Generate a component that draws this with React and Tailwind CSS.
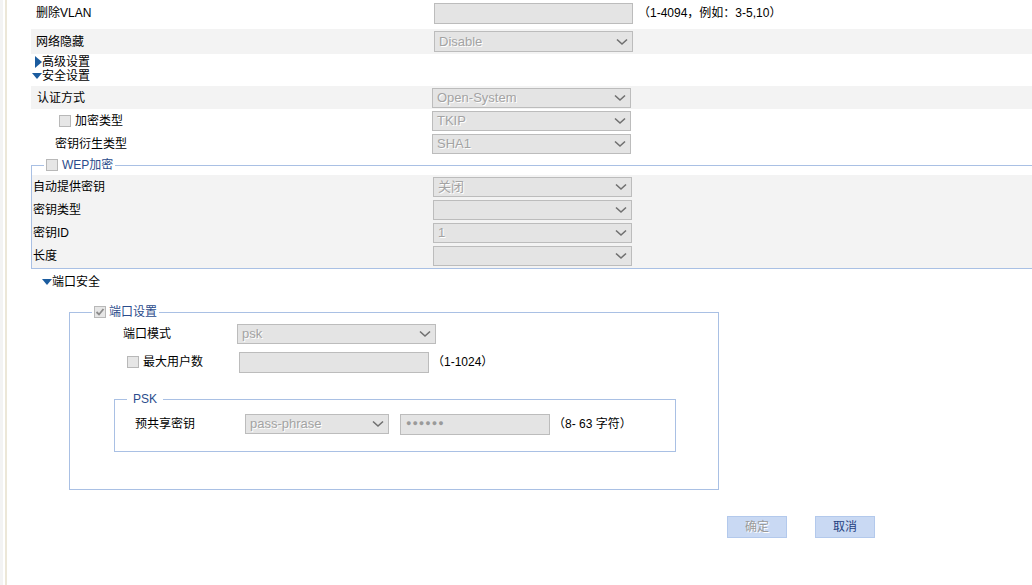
const font = { fontFamily: '"Liberation Sans", "Noto Sans CJK SC", sans-serif' };

function Chevron() {
  return (
    <svg width="12" height="8" viewBox="0 0 12 8" className="shrink-0">
      <polyline points="1,1.5 6,6 11,1.5" fill="none" stroke="#707070" strokeWidth="1.6" />
    </svg>
  );
}

function Select({ value, w = 'w-[199px]', h = 'h-[21px]' }) {
  return (
    <div className={`${w} ${h} shrink-0 flex items-center justify-between bg-[#e4e4e4] border border-[#bcbcbc] pl-[4px] pr-[4px] text-[13px] text-[#a3a3a3] [text-shadow:1px_1px_0_#fff]`}>
      <span>{value}</span>
      <Chevron />
    </div>
  );
}

function Input({ w = 'w-[199px]', children }) {
  return (
    <div className={`${w} h-[21px] shrink-0 flex items-center bg-[#e4e4e4] border border-[#bcbcbc] pl-[5px] text-[#9a9a9a] text-[9px] tracking-[1px]`}>
      {children}
    </div>
  );
}

function Check({ checked }) {
  return (
    <span className="w-[12px] h-[12px] shrink-0 bg-[#e6e6e6] border border-[#b8b8b8] flex items-center justify-center">
      {checked && (
        <svg width="10" height="10" viewBox="0 0 10 10">
          <polyline points="1.5,5 4,7.5 8.5,2" fill="none" stroke="#8c8c8c" strokeWidth="1.8" />
        </svg>
      )}
    </span>
  );
}

function TriRight() {
  return <span className="inline-block w-0 h-0 border-y-[6px] border-y-transparent border-l-[7px] border-l-[#1b5c9f]" />;
}

function TriDown() {
  return <span className="inline-block w-0 h-0 border-x-[5px] border-x-transparent border-t-[6px] border-t-[#1b5c9f]" />;
}

export default function App() {
  return (
    <div className="w-[1032px] h-[585px] overflow-hidden bg-white flex text-[12px] text-black" style={font}>
      {/* left edge */}
      <div className="w-[3px] shrink-0 bg-[#f3f3f3]" />
      <div className="w-[2px] shrink-0 bg-white" />
      <div className="w-[2px] shrink-0 bg-[#ece7d8]" />

      <div className="flex-1 min-w-0 flex flex-col">
        {/* 删除VLAN */}
        <div className="ml-[24px] h-[26px] mb-[3px] flex items-center">
          <div className="w-[403px] shrink-0 pl-[5px]">删除VLAN</div>
          <Input />
          <span className="ml-[5px] whitespace-nowrap">（1-4094，例如：3-5,10）</span>
        </div>
        {/* 网络隐藏 */}
        <div className="ml-[24px] h-[25px] flex items-center bg-[#f3f3f3]">
          <div className="w-[403px] shrink-0 pl-[5px]">网络隐藏</div>
          <Select value="Disable" />
        </div>

        <div className="ml-[28px] mt-[1px] h-[14px] flex items-center leading-[14px]">
          <TriRight />
          <span>高级设置</span>
        </div>
        <div className="ml-[25px] h-[14px] flex items-center leading-[14px]">
          <span className="-mt-[2px]"><TriDown /></span>
          <span>安全设置</span>
        </div>

        {/* 认证方式 */}
        <div className="ml-[24px] mt-[3px] h-[23px] flex items-center bg-[#f3f3f3]">
          <div className="w-[401px] shrink-0 pl-[6px]">认证方式</div>
          <Select value="Open-System" h="h-[20px]" />
        </div>
        <div className="ml-[24px] h-[23px] flex items-center">
          <div className="w-[401px] shrink-0 pl-[28px] flex items-center gap-[4px]">
            <Check />
            <span>加密类型</span>
          </div>
          <Select value="TKIP" h="h-[20px]" />
        </div>
        <div className="ml-[24px] h-[23px] flex items-center">
          <div className="w-[401px] shrink-0 pl-[24px]">密钥衍生类型</div>
          <Select value="SHA1" h="h-[20px]" />
        </div>

        {/* WEP */}
        <fieldset className="ml-[24px] mt-[3px] w-[1010px] border-l border-t border-b border-[#a9c0e4]">
          <legend className="ml-[12px] px-[2px] flex items-center gap-[4px] text-[#2b4c8c] h-[14px]">
            <Check />
            <span>WEP加密</span>
          </legend>
          <div className="mt-[3px] bg-[#f3f3f3] pb-[1px]">
            {[
              ['自动提供密钥', '关闭'],
              ['密钥类型', ''],
              ['密钥ID', '1'],
              ['长度', ''],
            ].map(([l, v]) => (
              <div key={l} className="h-[23px] flex items-center">
                <div className="w-[401px] shrink-0 pl-[1px]">{l}</div>
                <Select value={v} h="h-[20px]" />
              </div>
            ))}
          </div>
        </fieldset>

        {/* 端口安全 */}
        <div className="ml-[35px] mt-[6px] h-[14px] flex items-center leading-[14px]">
          <span className="-mt-[2px]"><TriDown /></span>
          <span>端口安全</span>
        </div>

        <fieldset className="ml-[62px] mt-[16px] w-[650px] h-[185px] border border-[#a9c0e4]">
          <legend className="ml-[22px] px-[2px] flex items-center gap-[3px] text-[#2b4c8c] h-[14px]">
            <Check checked />
            <span>端口设置</span>
          </legend>
          <div className="h-[29px] flex items-center">
            <div className="w-[167px] shrink-0 pl-[53px]">端口模式</div>
            <Select value="psk" h="h-[20px]" />
          </div>
          <div className="h-[28px] flex items-center">
            <div className="w-[169px] shrink-0 pl-[57px] flex items-center gap-[4px]">
              <Check />
              <span>最大用户数</span>
            </div>
            <Input w="w-[190px]" />
            <span className="ml-[3px]">（1-1024）</span>
          </div>

          <fieldset className="ml-[44px] mt-[16px] w-[562px] h-[60px] border border-[#a9c0e4]">
            <legend className="ml-[12px] px-[6px] text-[#2b4c8c] leading-[14px]">PSK</legend>
            <div className="mt-[8px] h-[20px] flex items-center">
              <div className="w-[130px] shrink-0 pl-[20px]">预共享密钥</div>
              <Select value="pass-phrase" w="w-[144px]" h="h-[20px]" />
              <div className="ml-[11px]">
                <Input w="w-[150px]">●●●●●●</Input>
              </div>
              <span className="ml-[3px] whitespace-nowrap">（8- 63 字符）</span>
            </div>
          </fieldset>
        </fieldset>

        {/* buttons */}
        <div className="ml-[720px] mt-[26px] flex gap-[28px]">
          <div className="w-[60px] h-[22px] flex items-center justify-center bg-[#c9d9f3] border border-[#b3c9ec] text-[#9a9a9a] [text-shadow:1px_1px_0_#fff]">确定</div>
          <div className="w-[60px] h-[22px] flex items-center justify-center bg-[#c9d9f3] border border-[#b3c9ec] text-[#1f3f80]">取消</div>
        </div>
      </div>
    </div>
  );
}
